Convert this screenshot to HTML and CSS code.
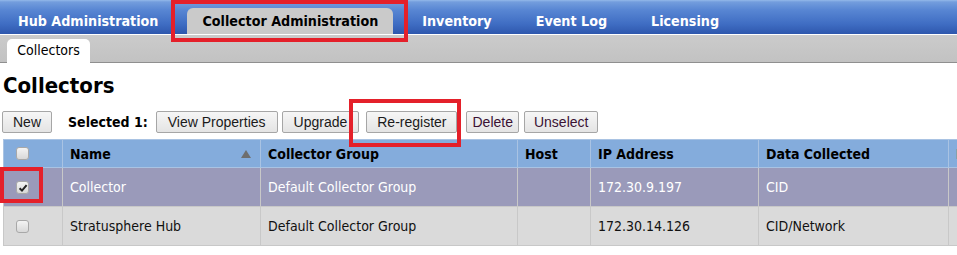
FILE: index.html
```html
<!DOCTYPE html>
<html lang="en">
<head>
<meta charset="utf-8">
<title>Collectors</title>
<link rel="stylesheet" href="styles.css">
</head>
<body>
<nav class="topnav">
  <a class="tab">Hub Administration</a>
  <a class="tab active">Collector Administration</a>
  <a class="tab">Inventory</a>
  <a class="tab">Event Log</a>
  <a class="tab">Licensing</a>
</nav>
<div class="subnav">
  <span class="subtab">Collectors</span>
</div>
<main class="content">
  <h1 class="title">Collectors</h1>
  <div class="toolbar">
    <button class="btn">New</button>
    <span class="selected">Selected 1:</span>
    <button class="btn btn-view">View Properties</button>
    <button class="btn btn-upgrade">Upgrade</button>
    <button class="btn btn-rereg">Re-register</button>
    <button class="btn btn-dim btn-del">Delete</button>
    <button class="btn btn-dim btn-unsel">Unselect</button>
  </div>
  <table class="grid">
    <colgroup>
      <col class="c-chk"><col class="c-name"><col class="c-group"><col class="c-host"><col class="c-ip"><col class="c-data"><col class="c-last">
    </colgroup>
    <thead>
      <tr>
        <th class="chk"><span class="cb"></span></th>
        <th><div class="th-sort">Name<span class="sort-up"></span></div></th>
        <th>Collector Group</th>
        <th>Host</th>
        <th>IP Address</th>
        <th>Data Collected</th>
        <th>Last Contact</th>
      </tr>
    </thead>
    <tbody>
      <tr class="row-selected">
        <td class="chk"><span class="cb checked"><svg viewBox="0 0 10 10" width="10" height="10"><path d="M1.6 5.2 L4 7.6 L8.6 2.2" fill="none" stroke="#222" stroke-width="2"/></svg></span></td>
        <td>Collector</td>
        <td>Default Collector Group</td>
        <td></td>
        <td>172.30.9.197</td>
        <td>CID</td>
        <td></td>
      </tr>
      <tr class="row">
        <td class="chk"><span class="cb"></span></td>
        <td>Stratusphere Hub</td>
        <td>Default Collector Group</td>
        <td></td>
        <td>172.30.14.126</td>
        <td>CID/Network</td>
        <td></td>
      </tr>
    </tbody>
  </table>
</main>
<div class="mark mark-tab"></div>
<div class="mark mark-btn"></div>
<div class="mark mark-chk"></div>
</body>
</html>
```

FILE: styles.css
```css
html, body {
  margin: 0;
  padding: 0;
  background: #fff;
  overflow: hidden;
}
body {
  font-family: "DejaVu Sans Condensed", "DejaVu Sans", sans-serif;
  color: #000;
  position: relative;
  width: 957px;
  height: 255px;
}

.topnav {
  display: flex;
  align-items: flex-end;
  height: 35px;
  box-sizing: border-box;
  padding-left: 3px;
  background: linear-gradient(#94b9ea 0, #739ddd 2px, #5886d3 10px, #3f6dc3 24px, #2e57ad 34px);
  border-bottom: 1px solid #fff;
}
.tab {
  display: block;
  height: 26px;
  line-height: 26px;
  padding: 0 15px;
  margin-right: 14px;
  color: #fff;
  font-weight: bold;
  font-size: 14.2px;
  white-space: nowrap;
}
.tab.active {
  background: #cacaca;
  color: #000;
  border-radius: 6px 6px 0 0;
}

.subnav {
  display: flex;
  align-items: flex-end;
  height: 27px;
  padding-left: 7px;
  background: linear-gradient(#cbcbcb, #c2c2c2);
  border-bottom: 1px solid #8f8f8f;
}
.subtab {
  display: block;
  width: 83px;
  height: 24px;
  line-height: 23px;
  box-sizing: border-box;
  text-align: center;
  background: #fff;
  border-radius: 5px 5px 0 0;
  font-size: 14px;
  margin-bottom: -1px;
}

.content {
  padding: 0 0 0 3px;
}
.title {
  margin: 0;
  padding-top: 9px;
  height: 38px;
  box-sizing: border-box;
  font-size: 22px;
  line-height: 27px;
  font-weight: bold;
}

.toolbar {
  display: flex;
  align-items: center;
  height: 22px;
  margin-top: 10px;
  margin-left: -1px;
}
.btn {
  height: 22px;
  padding: 0 10px;
  margin-right: 4px;
  border: 1px solid #a6a6a6;
  border-radius: 2px;
  background: linear-gradient(#f6f6f6, #e4e4e4);
  font-family: "Liberation Sans", Arial, sans-serif;
  font-size: 14px;
  color: #1a1a1a;
  box-sizing: border-box;
}
.btn-view { padding: 0 11px; }
.btn-upgrade { padding: 0 11px; margin-right: 7px; }
.btn-rereg { margin-right: 9px; }
.btn-del { padding: 0 5px; margin-right: 5px; }
.btn-unsel { padding: 0 9px; }
.btn-dim { color: #3a1233; }
.selected {
  font-weight: bold;
  font-size: 14px;
  margin: 0 8px 0 12px;
}

.grid {
  margin-top: 6px;
  border-collapse: collapse;
  table-layout: fixed;
  width: 1050px;
  font-size: 14px;
}
.c-chk { width: 59px; }
.c-name { width: 198px; }
.c-group { width: 257px; }
.c-host { width: 73px; }
.c-ip { width: 168px; }
.c-data { width: 190px; }
.c-last { width: 105px; }

.grid th, .grid td {
  border: 1px solid #c8c8c8;
  padding: 0 7px;
  text-align: left;
  white-space: nowrap;
  overflow: hidden;
}
.grid th {
  height: 27px;
  background: #84acdc;
  font-weight: bold;
  font-size: 14px;
  color: #000;
  border-color: #a9c3e3;
}
.grid td {
  height: 38px;
}
.row-selected td {
  background: #9a9aba;
  color: #fff;
}
.row td {
  background: #dadada;
  color: #111;
}
.grid .chk {
  padding: 0 0 0 12px;
}
.th-sort {
  display: flex;
  align-items: center;
  justify-content: space-between;
}
.sort-up {
  width: 0;
  height: 0;
  border-left: 5px solid transparent;
  border-right: 5px solid transparent;
  border-bottom: 8px solid #6e6e6e;
  margin-right: 2px;
}
.cb {
  display: block;
  width: 13px;
  height: 13px;
  box-sizing: border-box;
  border: 1px solid #a8a8a8;
  border-radius: 3px;
  background: linear-gradient(#f4f4f4, #d8d8d8);
  position: relative;
}
.cb svg {
  position: absolute;
  left: 1px;
  top: 1px;
}

.mark {
  position: absolute;
  border: 4px solid #e4202a;
  box-sizing: border-box;
}
.mark-tab { left: 171px; top: 0; width: 237px; height: 42px; }
.mark-btn { left: 349px; top: 99px; width: 112px; height: 48px; }
.mark-chk { left: 0; top: 167px; width: 43px; height: 36px; }
```
